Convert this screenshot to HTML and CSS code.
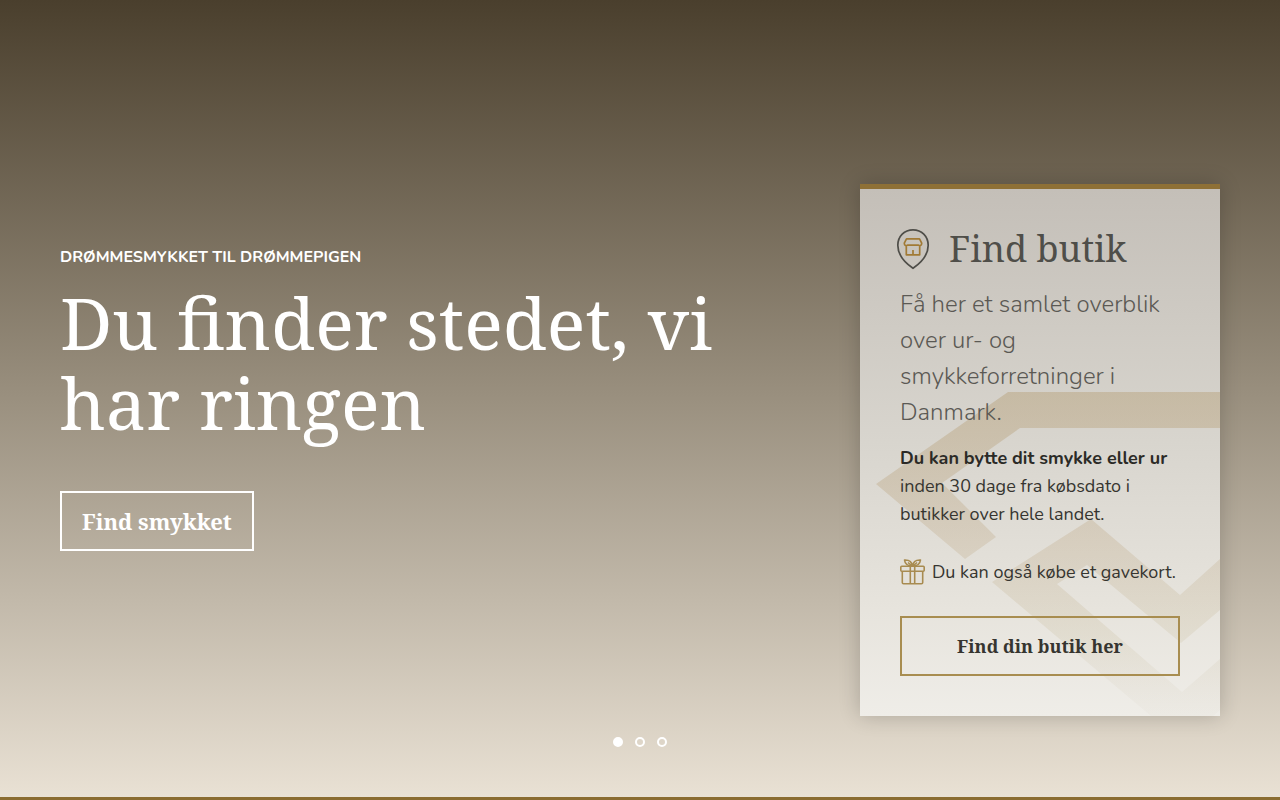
FILE: index.html
```html
<!DOCTYPE html>
<html lang="da">
<head>
<meta charset="utf-8">
<meta name="viewport" content="width=device-width, initial-scale=1">
<title>Find smykket</title>
<link rel="stylesheet" href="styles.css">
</head>
<body>
<main class="hero">
  <div class="hero-body">
    <section class="intro">
      <p class="eyebrow">DRØMMESMYKKET TIL DRØMMEPIGEN</p>
      <h1 class="headline">Du finder stedet, vi har ringen</h1>
      <a class="button button-light" href="#smykker">Find smykket</a>
    </section>
    <aside class="card">
      <svg class="card-mark" viewBox="0 0 344 324" aria-hidden="true">
        <defs>
          <linearGradient id="fade" gradientUnits="userSpaceOnUse" x1="0" y1="0" x2="0" y2="324">
            <stop offset="0" stop-color="#b39b70" stop-opacity=".42"/>
            <stop offset=".45" stop-color="#b99f78" stop-opacity=".26"/>
            <stop offset=".75" stop-color="#c2b590" stop-opacity=".2"/>
            <stop offset="1" stop-color="#d0c8b8" stop-opacity=".08"/>
          </linearGradient>
        </defs>
        <path fill="url(#fade)" d="M0 92 132 0H344V36H144L66 91 120 145 89 167ZM215 127 304 203 344 167V218L305 251 211 173 181 192 306 300 344 267V318L337 324H275L116 190Z"/>
      </svg>
      <h2 class="card-title">
        <svg class="pin" viewBox="0 0 34 42" aria-hidden="true">
          <path d="M17 40.300C11.500 36.500 1.800 28 1.800 17.300 1.800 8 8.500 1.800 17 1.800S32.200 8 32.200 17.300C32.200 28 22.500 36.500 17 40.300Z" fill="none" stroke="#4f4e49" stroke-width="1.700"/>
          <path d="M10.500 10.800H23.500L25.700 15.200C25.700 17.800 23.500 18 22.500 17.200H11.500C10.500 18 8.300 17.800 8.300 15.200ZM10.300 17.800V26.800H23.700V17.800M17 22V26.500" fill="none" stroke="#a17a35" stroke-width="1.700" stroke-linejoin="round"/>
        </svg>
        <span>Find butik</span>
      </h2>
      <p class="lead">Få her et samlet overblik over ur- og smykkeforretninger i Danmark.</p>
      <p class="text"><strong>Du kan bytte dit smykke eller ur</strong> inden 30 dage fra købsdato i butikker over hele landet.</p>
      <p class="gift">
        <svg class="gift-icon" viewBox="0 0 25 26" aria-hidden="true">
          <g fill="none" stroke="#a88b50" stroke-width="1.600" stroke-linejoin="round">
            <rect x=".8" y="7.300" width="23.400" height="4.900" rx="1"/>
            <path d="M2.300 12.200V23.500Q2.300 24.800 3.600 24.800H21.400Q22.700 24.800 22.700 23.500V12.200M10.300 7.300V24.800M14.700 7.300V24.800M12.200 7C12 3 9 .8 4.500 1 5 5 8 7 12.200 7ZM8 3.500 12 7M12.800 7C13 3 16 .8 20.500 1 20 5 17 7 12.800 7ZM17 3.500 13 7"/>
          </g>
        </svg>
        <span>Du kan også købe et gavekort.</span>
      </p>
      <a class="button button-gold" href="#butik">Find din butik her</a>
    </aside>
  </div>
  <nav class="dots" aria-label="Slides">
    <button class="dot dot-active" type="button" aria-label="Slide 1"></button>
    <button class="dot" type="button" aria-label="Slide 2"></button>
    <button class="dot" type="button" aria-label="Slide 3"></button>
  </nav>
</main>
</body>
</html>
```
FILE: styles.css
```css
* { box-sizing: border-box; }

body {
  margin: 0;
  font-family: Nunito, Lato, sans-serif;
  color: #363530;
}

h1, h2, p { margin: 0; }

.hero {
  position: relative;
  min-height: 100vh;
  display: flex;
  flex-direction: column;
  background: linear-gradient(#4a3f2d, #9a907f 50%, #e9e1d4);
  border-bottom: 3px solid #8a6c31;
}

.hero-body {
  flex: 1;
  display: grid;
  grid-template-columns: minmax(0, 1fr) 360px;
  gap: 100px;
  align-items: center;
  padding: 0 60px;
}

.intro {
  padding-bottom: 2px;
  color: #fff;
}

.eyebrow {
  font-size: 16px;
  line-height: 24px;
  font-weight: 700;
}

.headline {
  margin: 13px 0 49px;
  font-family: "Noto Serif", "DejaVu Serif Condensed", "DejaVu Serif", serif;
  font-size: 72px;
  line-height: 80px;
  font-weight: 400;
}

.button {
  display: inline-flex;
  align-items: center;
  justify-content: center;
  height: 60px;
  padding: 0 20px;
  border: 2px solid;
  font-family: "Noto Serif", "DejaVu Serif Condensed", "DejaVu Serif", serif;
  font-weight: 700;
  text-decoration: none;
}

.button-light {
  border-color: #fff;
  color: #fff;
  font-size: 22px;
}

.button-gold {
  width: 100%;
  border-color: #a88d50;
  color: #363530;
  font-size: 18px;
}

.card {
  position: relative;
  display: flex;
  flex-direction: column;
  margin-top: 103px;
  padding: 36px 40px 40px;
  border-top: 5px solid #8e7036;
  background: linear-gradient(#c4bfb8, #d8d5ce 48%, #e7e4dd 80%, #efede8);
  box-shadow: 0 0 20px rgba(0, 0, 0, .2);
}

.card > * { position: relative; }

.card > .card-mark {
  position: absolute;
  right: 0;
  bottom: 0;
  width: 344px;
  height: 324px;
}

.card-title {
  display: flex;
  align-items: center;
  gap: 19px;
  margin-left: -4px;
  font-family: "Noto Serif", "DejaVu Serif Condensed", "DejaVu Serif", serif;
  font-size: 36px;
  line-height: 48px;
  font-weight: 400;
  color: #4f4e49;
}

.pin { width: 34px; height: 42px; }

.lead {
  margin-top: 13px;
  font-size: 24px;
  line-height: 36px;
  font-weight: 300;
  color: #5b5954;
}

.text {
  margin-top: 14px;
  font-size: 18px;
  line-height: 28px;
}

.text strong { color: #2b2a26; }

.gift {
  display: flex;
  align-items: center;
  gap: 7px;
  margin: 30px 0;
  font-size: 18px;
  line-height: 28px;
  white-space: nowrap;
}

.gift-icon { width: 25px; height: 26px; }

.dots {
  position: absolute;
  left: 0;
  right: 0;
  bottom: 50px;
  display: flex;
  justify-content: center;
  gap: 12px;
}

.dot {
  width: 10px;
  height: 10px;
  padding: 0;
  border: 2px solid #fff;
  border-radius: 50%;
  background: transparent;
}

.dot-active { background: #fff; }
```
